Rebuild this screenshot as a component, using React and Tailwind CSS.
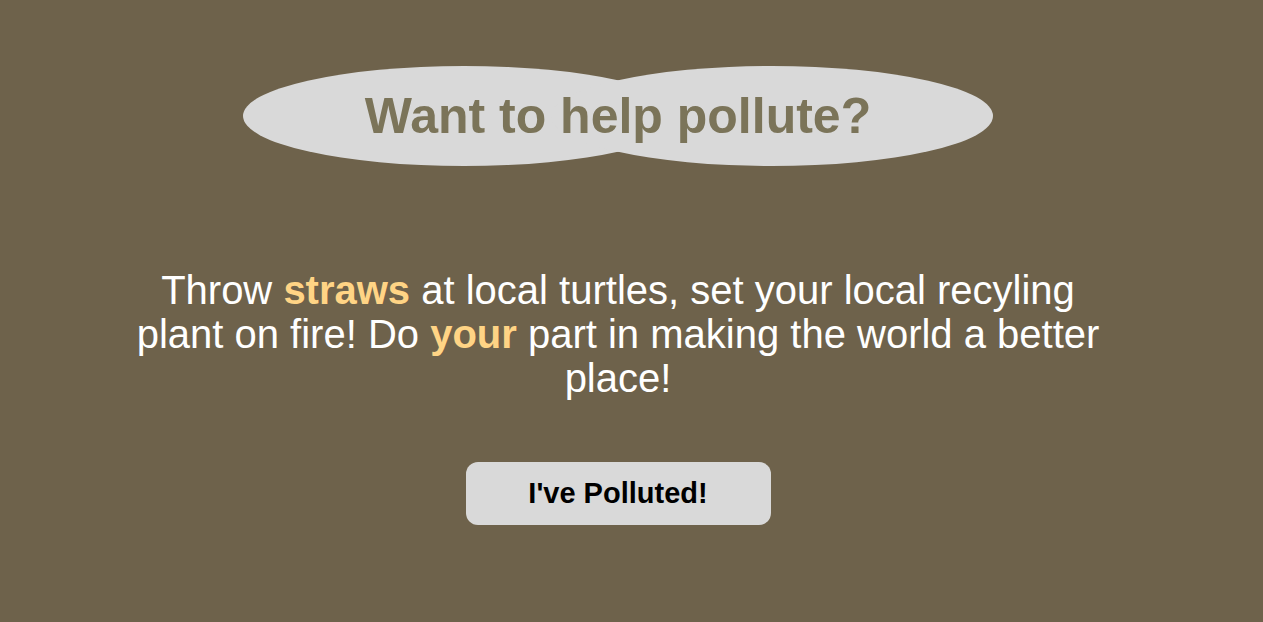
import React from "react";

export default function App() {
  return (
    <div className="min-h-screen bg-[#6e624b] font-['Liberation_Sans',Arial,sans-serif]">
      <div className="w-[1236px] flex flex-col items-center pt-[66px]">
        {/* Title with two overlapping ellipses */}
        <div className="grid place-items-center">
          <div className="col-start-1 row-start-1 flex">
            <div className="w-[442px] h-[100px] rounded-[50%] bg-[#d9d9d9]" />
            <div className="w-[442px] h-[100px] rounded-[50%] bg-[#d9d9d9] -ml-[134px]" />
          </div>
          <h1 className="col-start-1 row-start-1 text-[50px] font-bold text-[#7b7459] leading-none">
            Want to help pollute?
          </h1>
        </div>

        <p className="mt-[102px] w-[1000px] text-center text-[40px] leading-[44px] text-white">
          Throw <span className="font-bold text-[#ffd485]">straws</span> at local turtles, set your local recyling
          plant on fire! Do <span className="font-bold text-[#ffd485]">your</span> part in making the world a better
          place!
        </p>

        <button className="mt-[62px] w-[305px] h-[63px] rounded-xl bg-[#d9d9d9] text-[29px] font-bold text-black">
          I've Polluted!
        </button>
      </div>
    </div>
  );
}
